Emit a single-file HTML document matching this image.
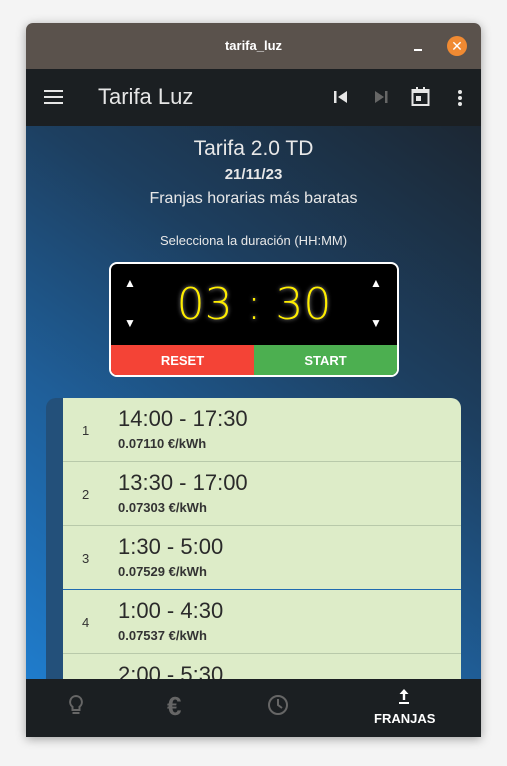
<!DOCTYPE html>
<html><head><meta charset="utf-8"><style>
*{margin:0;padding:0;box-sizing:border-box}
body{width:507px;height:766px;background:#f4f4f4;font-family:"Liberation Sans","DejaVu Sans",sans-serif;position:relative;overflow:hidden}
.win{position:absolute;left:26px;top:23px;width:455px;height:714px;box-shadow:0 2px 10px rgba(0,0,0,.35);border-radius:7px 7px 0 0;overflow:hidden}
.title{height:46px;background:#5a524c;color:#fff;font-weight:bold;font-size:13px;text-align:center;line-height:46px;position:relative}
.min{position:absolute;left:388px;top:26px;width:8px;height:2px;background:#fff}
.close{position:absolute;left:421px;top:13px;width:20px;height:20px;border-radius:50%;background:#f08a32;color:#fff;font-size:14px;line-height:20px;text-align:center}
.bar{height:57px;background:#1b1f22;position:relative;color:#e6e6e6}
.content{position:absolute;top:103px;left:0;width:455px;height:553px;background:linear-gradient(35deg,#1f7ccc 0%,#1f5e98 35%,#1d3f60 65%,#1c2733 100%);overflow:hidden}
.c{text-align:center;color:#e8e8e8}
.nav{position:absolute;top:656px;left:0;width:455px;height:58px;background:#1b1f22}
.row{height:64px;border-bottom:1px solid #b8c9aa;position:relative}
.num{position:absolute;left:19px;top:25px;font-size:13px;color:#333}
.t{position:absolute;left:55px;top:8px;font-size:22px;color:#2a2a2a}
.p{position:absolute;left:55px;top:38px;font-size:13px;font-weight:bold;color:#333}
.ar{position:absolute;color:#fff;font-size:12px}
</style></head><body>
<div class="win">
<div class="title">tarifa_luz<div class="min"></div><div class="close">✕</div></div>
<div class="bar">
<svg style="position:absolute;left:18px;top:20px" width="20" height="16"><rect y="1" width="19" height="2" fill="#e6e6e6"/><rect y="7" width="19" height="2" fill="#e6e6e6"/><rect y="13" width="19" height="2" fill="#e6e6e6"/></svg>
<div style="position:absolute;left:72px;top:15px;font-size:22px">Tarifa Luz</div>
<svg style="position:absolute;left:308px;top:21px" width="14" height="14"><rect x="0" y="1" width="2.5" height="12" fill="#e6e6e6"/><path d="M13 1V13L4 7Z" fill="#e6e6e6"/></svg>
<svg style="position:absolute;left:348px;top:21px" width="14" height="14"><path d="M1 1V13L10 7Z" fill="#666"/><rect x="11" y="1" width="2.5" height="12" fill="#666"/></svg>
<svg style="position:absolute;left:385px;top:17px" width="20" height="22"><rect x="1.5" y="4" width="16" height="15" fill="none" stroke="#e6e6e6" stroke-width="2"/><rect x="1.5" y="3" width="16" height="4" fill="#e6e6e6"/><rect x="5" y="1" width="2" height="4" fill="#e6e6e6"/><rect x="12" y="1" width="2" height="4" fill="#e6e6e6"/><rect x="5" y="10" width="5" height="5" fill="#e6e6e6"/></svg>
<svg style="position:absolute;left:431px;top:20px" width="6" height="18"><circle cx="3" cy="3" r="2" fill="#e6e6e6"/><circle cx="3" cy="9" r="2" fill="#e6e6e6"/><circle cx="3" cy="15" r="2" fill="#e6e6e6"/></svg>
</div>
<div class="content">
<div class="c" style="position:absolute;top:11px;width:455px;font-size:21px">Tarifa 2.0 TD</div>
<div class="c" style="position:absolute;top:40px;width:455px;font-size:15px;font-weight:bold">21/11/23</div>
<div class="c" style="position:absolute;top:64px;width:455px;font-size:16px">Franjas horarias más baratas</div>
<div class="c" style="position:absolute;top:107px;width:455px;font-size:13px">Selecciona la duración (HH:MM)</div>
<div style="position:absolute;left:83px;top:136px;width:290px;height:115px;border:2px solid #fff;border-radius:8px;background:#000;overflow:hidden">
<div style="position:absolute;left:0;top:0;width:286px;height:81px;text-align:center;color:#ffee00;font-family:'DejaVu Sans ExtraLight','DejaVu Sans',sans-serif;font-weight:200;font-size:44px;line-height:81px;text-shadow:0 0 4px #999">03 : 30</div>
<div class="ar" style="left:13px;top:12px">▲</div>
<div class="ar" style="left:13px;top:52px">▼</div>
<div class="ar" style="left:259px;top:12px">▲</div>
<div class="ar" style="left:259px;top:52px">▼</div>
<div style="position:absolute;left:0;top:81px;width:143px;height:32px;background:#f44336;color:#fff;font-weight:bold;font-size:13px;text-align:center;line-height:32px">RESET</div>
<div style="position:absolute;left:143px;top:81px;width:143px;height:32px;background:#4caf50;color:#fff;font-weight:bold;font-size:13px;text-align:center;line-height:32px">START</div>
</div>
<div style="position:absolute;left:20px;top:272px;width:415px;height:300px;border-radius:10px 10px 0 0;overflow:hidden">
<div style="position:absolute;left:0;top:0;width:17px;height:300px;background:#23507a"></div>
<div style="position:absolute;left:17px;top:0;width:398px;height:300px;background:#ddecc8">
<div class="row"><span class="num">1</span><span class="t">14:00 - 17:30</span><span class="p">0.07110 €/kWh</span></div>
<div class="row"><span class="num">2</span><span class="t">13:30 - 17:00</span><span class="p">0.07303 €/kWh</span></div>
<div class="row" style="border-bottom:1px solid #1f6ab0"><span class="num">3</span><span class="t">1:30 - 5:00</span><span class="p">0.07529 €/kWh</span></div>
<div class="row"><span class="num">4</span><span class="t">1:00 - 4:30</span><span class="p">0.07537 €/kWh</span></div>
<div class="row"><span class="num">5</span><span class="t">2:00 - 5:30</span></div>
</div></div>
</div>
<div class="nav">
<svg style="position:absolute;left:42px;top:15px" width="16" height="24"><path d="M8 2a6 6 0 0 0-3.5 10.8V16h7v-3.2A6 6 0 0 0 8 2z" fill="none" stroke="#666" stroke-width="2"/><rect x="4.5" y="18" width="7" height="2" fill="#666"/></svg>
<div style="position:absolute;left:141px;top:12px;color:#666;font-size:26px;font-weight:bold">€</div>
<svg style="position:absolute;left:241px;top:15px" width="22" height="22"><circle cx="11" cy="11" r="9" fill="none" stroke="#666" stroke-width="2"/><path d="M11 5V11L15 14" fill="none" stroke="#666" stroke-width="2"/></svg>
<svg style="position:absolute;left:372px;top:9px" width="12" height="17"><path d="M6 1L1.5 6H4.8V12H7.2V6H10.5Z" fill="#fff"/><rect x="1" y="14" width="10" height="2" fill="#fff"/></svg>
<div style="position:absolute;left:348px;top:32px;color:#fff;font-size:13px;font-weight:bold">FRANJAS</div>
</div>
</div>
</body></html>
